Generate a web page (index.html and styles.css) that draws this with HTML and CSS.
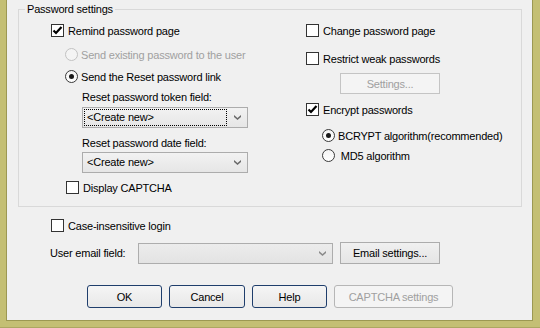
FILE: index.html
```html
<!DOCTYPE html>
<html lang="en">
<head>
  <meta charset="UTF-8">
  <title>Password settings</title>
  <link rel="stylesheet" href="styles.css">
</head>
<body>
  <div class="dialog">
    <fieldset class="group">
      <legend>Password settings</legend>
      <div class="group-body">

        <div class="col col-left">
          <div class="check remind">
            <span class="cb"><svg width="11" height="11" viewBox="0 0 11 11"><path d="M1.5 5.5 L4 8 L9.5 2" fill="none" stroke="#000" stroke-width="2.2"/></svg></span>
            <span class="txt">Remind password page</span>
          </div>
          <div class="check radio-row existing disabled">
            <span class="rb"></span>
            <span class="txt">Send existing password to the user</span>
          </div>
          <div class="check radio-row reset">
            <span class="rb on"></span>
            <span class="txt">Send the Reset password link</span>
          </div>
          <div class="field-label lbl-token">Reset password token field:</div>
          <div class="select sel-token">
            <span class="value focus">&lt;Create new&gt;</span>
            <span class="arrow"><svg width="7" height="5" viewBox="0 0 7 5"><path d="M0 0 L3.5 3 L7 0 L7 2 L3.5 5 L0 2 Z" fill="#6a6a6a"/></svg></span>
          </div>
          <div class="field-label lbl-date">Reset password date field:</div>
          <div class="select sel-date">
            <span class="value">&lt;Create new&gt;</span>
            <span class="arrow"><svg width="7" height="5" viewBox="0 0 7 5"><path d="M0 0 L3.5 3 L7 0 L7 2 L3.5 5 L0 2 Z" fill="#6a6a6a"/></svg></span>
          </div>
          <div class="check captcha">
            <span class="cb"></span>
            <span class="txt">Display CAPTCHA</span>
          </div>
        </div>

        <div class="col col-right">
          <div class="check change">
            <span class="cb"></span>
            <span class="txt">Change password page</span>
          </div>
          <div class="check restrict">
            <span class="cb"></span>
            <span class="txt">Restrict weak passwords</span>
          </div>
          <div class="btn-flat disabled settings">Settings...</div>
          <div class="check encrypt">
            <span class="cb"><svg width="11" height="11" viewBox="0 0 11 11"><path d="M1.5 5.5 L4 8 L9.5 2" fill="none" stroke="#000" stroke-width="2.2"/></svg></span>
            <span class="txt">Encrypt passwords</span>
          </div>
          <div class="check radio-row bcrypt">
            <span class="rb on"></span>
            <span class="txt">BCRYPT algorithm(recommended)</span>
          </div>
          <div class="check radio-row md5">
            <span class="rb"></span>
            <span class="txt">&nbsp;MD5 algorithm</span>
          </div>
        </div>

      </div>
    </fieldset>

    <div class="check case">
      <span class="cb"></span>
      <span class="txt">Case-insensitive login</span>
    </div>

    <div class="email-row">
      <span class="email-label">User email field:</span>
      <div class="select sel-email disabled">
        <span class="value"></span>
        <span class="arrow"><svg width="7" height="5" viewBox="0 0 7 5"><path d="M0 0 L3.5 3 L7 0 L7 2 L3.5 5 L0 2 Z" fill="#8a8a8a"/></svg></span>
      </div>
      <div class="btn-flat email-btn">Email settings...</div>
    </div>

    <div class="buttons">
      <div class="btn">OK</div>
      <div class="btn cancel">Cancel</div>
      <div class="btn">Help</div>
      <div class="btn disabled wide">CAPTCHA settings</div>
    </div>
  </div>
</body>
</html>
```

FILE: styles.css
```css
html {
  background-color: #c4bf74;
}

body {
  margin: 0;
  height: 328px;
  box-sizing: border-box;
  border-bottom: 1px solid #aca762;
  font-family: "Liberation Sans", Arial, sans-serif;
  font-size: 11px;
  letter-spacing: -0.2px;
  color: #000;
}

.dialog {
  margin-left: 6px;
  box-sizing: border-box;
  border: 1px solid #9c9853;
  border-top: none;
  width: 527px;
  height: 321px;
  background-color: #f0f0f0;
  padding-top: 3px;
}

.group {
  margin: 0 0 0 11px;
  padding: 0;
  width: 504px;
  box-sizing: border-box;
  border: 1px solid #d9d9d9;
}

.group legend {
  margin-left: 6px;
  padding: 0 2px;
  line-height: 12px;
}

.group-body {
  display: flex;
  height: 191px;
  box-sizing: border-box;
  padding: 9px 0 0 32px;
}

.col {
  display: flex;
  flex-direction: column;
  align-items: flex-start;
}

.col-left {
  width: 255px;
}

/* checkbox / radio rows */
.check {
  display: flex;
  align-items: center;
  height: 13px;
  line-height: 13px;
}

.check .txt {
  margin-left: 4px;
  padding-top: 1px;
  white-space: nowrap;
}

.cb {
  width: 13px;
  height: 13px;
  box-sizing: border-box;
  border: 1px solid #333;
  background-color: #fff;
  display: flex;
  align-items: center;
  justify-content: center;
}

.rb {
  width: 13px;
  height: 13px;
  box-sizing: border-box;
  border: 1px solid #3a3a3a;
  border-radius: 50%;
  background: linear-gradient(#f4f4f4, #fff);
  display: flex;
  align-items: center;
  justify-content: center;
}

.rb.on::after {
  content: "";
  width: 5px;
  height: 5px;
  border-radius: 50%;
  background-color: #1a1a1a;
}

.check.disabled .rb {
  border-color: #c2c2c2;
  background: #f4f4f4;
}

.check.disabled .txt {
  color: #a0a0a0;
}

.radio-row .txt {
  margin-left: 3px;
}

.existing { margin: 11px 0 0 14px; }
.reset { margin: 9px 0 0 14px; }
.captcha { margin: 8px 0 0 15px; }

.field-label {
  line-height: 13px;
  margin-left: 31px;
  white-space: nowrap;
}

.lbl-token { margin-top: 8px; }
.lbl-date { margin-top: 9px; }

/* combo boxes */
.select {
  display: flex;
  width: 166px;
  height: 21px;
  box-sizing: border-box;
  border: 1px solid #acacac;
  background: linear-gradient(#f2f2f2, #e6e6e6);
  padding: 1px;
}

.select .value {
  flex: 1;
  padding-left: 2px;
  line-height: 15px;
  border: 1px solid transparent;
}

.select .value.focus {
  border: 1px dotted #000;
}

.select .arrow {
  width: 18px;
  display: flex;
  align-items: center;
  justify-content: center;
  padding-left: 1px;
}

.sel-token { margin: 3px 0 0 31px; }
.sel-date { margin: 2px 0 0 31px; }

.change { margin-top: 0; }
.restrict { margin-top: 15px; }
.encrypt { margin-top: 9px; }
.bcrypt { margin: 13px 0 0 16px; }
.md5 { margin: 7px 0 0 16px; }

/* plain square buttons */
.btn-flat {
  height: 21px;
  box-sizing: border-box;
  border: 1px solid #acacac;
  background: linear-gradient(#f0f0f0, #e5e5e5);
  display: flex;
  align-items: center;
  justify-content: center;
}

.btn-flat.disabled {
  border-color: #c4c4c4;
  background: #f4f4f4;
  color: #a0a0a0;
}

.settings {
  width: 100px;
  margin: 8px 0 0 34px;
}

/* below the group */
.case {
  margin: 12px 0 0 44px;
}

.email-row {
  display: flex;
  align-items: center;
  height: 22px;
  margin: 10px 0 0 43px;
}

.email-label {
  width: 88px;
}

.sel-email {
  width: 195px;
}

.sel-email.disabled {
  border-color: #adadad;
  background: linear-gradient(#ececec, #e3e3e3);
}

.email-btn {
  width: 100px;
  height: 22px;
  margin-left: 7px;
}

.buttons {
  display: flex;
  gap: 7px;
  margin: 21px 0 0 80px;
}

.btn {
  width: 75px;
  height: 23px;
  box-sizing: border-box;
  border: 1px solid #1f3e6c;
  border-radius: 3px;
  background: linear-gradient(#f5f5f5, #e8e8e8);
  display: flex;
  align-items: center;
  justify-content: center;
}

.btn.cancel {
  width: 76px;
}

.btn.wide {
  width: 119px;
}

.btn.disabled {
  border-color: #b6b6b6;
  background: #f4f4f4;
  color: #a0a0a0;
}
```
